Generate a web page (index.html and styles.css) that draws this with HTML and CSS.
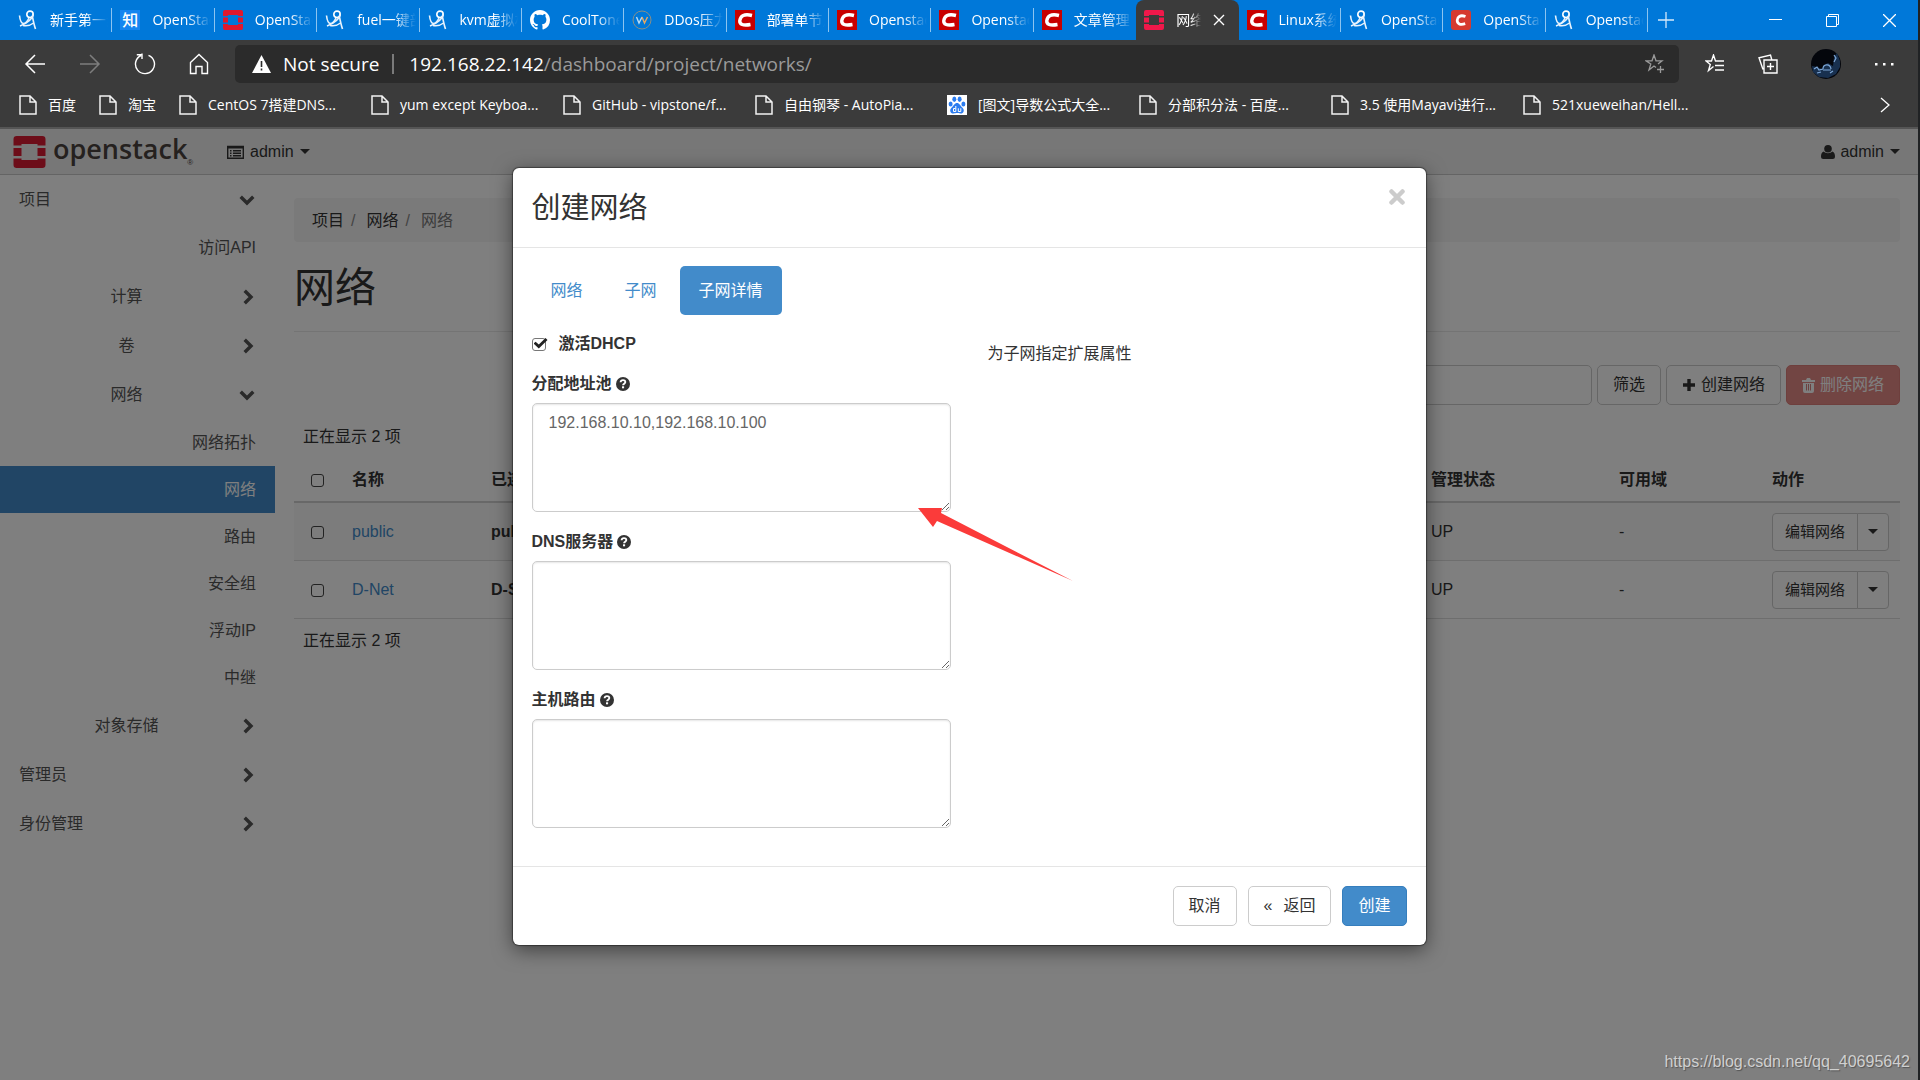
FILE: index.html
```html
<!DOCTYPE html>
<html lang="zh-CN">
<head>
<meta charset="utf-8">
<title>网络 - OpenStack Dashboard</title>
<link rel="stylesheet" href="styles.css">
</head>
<body>
<svg class="sprite" aria-hidden="true">
  <symbol id="i-figure" viewBox="0 0 20 20"><path d="M1.500 5.500c.5 4.500 1.500 8 4 8 2.500 0 4-2.500 5.500-5.500" fill="none" stroke="#e8f3fd" stroke-width="1.600"/><circle cx="12" cy="4.300" r="3.200" fill="none" stroke="#fff" stroke-width="1.600"/><path d="M15 4c0 4-5 9-13 12M14.500 7c.8 4 1.600 8 3 12M5 15.500c4 .8 8-.5 10.500-2.500" fill="none" stroke="#e8f3fd" stroke-width="1.600"/></symbol>
  <symbol id="i-os" viewBox="0 0 20 20"><path fill="currentColor" d="M2 0h16a2 2 0 0 1 2 2v4h-5V5H5v1H0V2a2 2 0 0 1 2-2zM0 7.500h5v5H0zM15 7.500h5v5h-5zM0 14h5v1h10v-1h5v4a2 2 0 0 1-2 2H2a2 2 0 0 1-2-2z"/></symbol>
  <symbol id="i-github" viewBox="0 0 16 16"><path fill="#fff" d="M8 0C3.580 0 0 3.580 0 8c0 3.540 2.290 6.530 5.470 7.590.4.070.55-.17.55-.38 0-.19-.01-.82-.01-1.490-2.010.37-2.530-.49-2.690-.94-.09-.23-.48-.94-.82-1.130-.28-.15-.68-.52-.01-.53.63-.01 1.080.58 1.230.82.72 1.210 1.870.87 2.330.66.070-.52.280-.87.510-1.070-1.780-.2-3.640-.89-3.640-3.950 0-.87.310-1.590.82-2.150-.08-.2-.36-1.020.080-2.120 0 0 .67-.21 2.200.82.640-.18 1.320-.27 2-.27s1.360.090 2 .27c1.530-1.040 2.200-.82 2.200-.82.440 1.100.160 1.920.080 2.120.51.560.82 1.270.82 2.150 0 3.070-1.870 3.750-3.650 3.950.29.250.54.730.54 1.480 0 1.070-.01 1.930-.01 2.200 0 .21.150.46.550.38A8.010 8.010 0 0 0 16 8c0-4.420-3.580-8-8-8z"/></symbol>
  <symbol id="i-w" viewBox="0 0 20 20"><circle cx="10" cy="10" r="9" fill="none" stroke="#8a8f86" stroke-width="1"/><path d="M4.500 7l2.500 6 3-6" fill="none" stroke="#b9dcf8" stroke-width="1.400"/><path d="M10 7l2.500 6 3-6" fill="none" stroke="#e8a860" stroke-width="1.400"/></symbol>
  <symbol id="i-csdn" viewBox="0 0 20 20"><path fill="#c80000" d="M0 0h20v20H0z"/><path d="M17 5.500C9 3.500 5.500 6 4.800 10.500 4.300 14.500 8 15.800 15.500 14.500" fill="none" stroke="#fff" stroke-width="3.400"/></symbol>
  <symbol id="i-csdn2" viewBox="0 0 20 20"><rect width="20" height="20" rx="3" fill="#d63a2f"/><path d="M14.500 6.500C9 4.500 6.300 7 6.200 10.300c0 3.500 3 5 8 3.400" fill="none" stroke="#fff" stroke-width="2.800"/></symbol>
  <symbol id="i-page" viewBox="0 0 18 20"><path d="M1 1h10l6 6v12H1zM11 1v6h6" fill="none" stroke="#f2f2f2" stroke-width="1.500"/></symbol>
  <symbol id="i-baidu" viewBox="0 0 20 20"><path fill="#fff" d="M0 0h20v20H0z"/><g fill="#2b7cf0"><ellipse cx="3.600" cy="9" rx="2" ry="2.600"/><ellipse cx="7.300" cy="4.300" rx="2" ry="2.700"/><ellipse cx="12.600" cy="4.300" rx="2" ry="2.700"/><ellipse cx="16.400" cy="9" rx="2" ry="2.600"/><path d="M10 8c2.500 0 3 2.500 5 4.200 3 2.500 2 6.300-1.500 6.300-1.500 0-2-.4-3.500-.4s-2 .4-3.500.4c-3.500 0-4.500-3.800-1.500-6.300C7 10.500 7.500 8 10 8z"/></g><path d="M8.800 11v5.500H6.500v-3h2M11.300 13.300v3.200h2.500v-3.200" fill="none" stroke="#fff" stroke-width="1"/></symbol>
  <symbol id="i-down" viewBox="0 0 14 14"><path d="M1.500 4.200L7 9.700l5.500-5.500" fill="none" stroke="currentColor" stroke-width="3"/></symbol>
  <symbol id="i-right" viewBox="0 0 14 14"><path d="M5 1.500L10.500 7 5 12.500" fill="none" stroke="currentColor" stroke-width="3"/></symbol>
  <symbol id="i-help" viewBox="0 0 14 14"><circle cx="7" cy="7" r="7" fill="#333"/><path d="M4.600 5.200C4.800 2.400 9.300 2.500 9.300 5c0 1.700-2.200 1.700-2.200 3.200" fill="none" stroke="#fff" stroke-width="1.900"/><path fill="#fff" d="M6 9.300h2.100v2H6z"/></symbol>
</svg>

<header class="browser">
  <div class="tabs">
    <div class="tab-list">
      <div class="tab"><svg class="fav"><use href="#i-figure"/></svg><span>新手第一步</span></div>
      <div class="tab"><b class="fav zhi">知</b><span>OpenStack</span></div>
      <div class="tab"><svg class="fav red"><use href="#i-os"/></svg><span>OpenStack</span></div>
      <div class="tab"><svg class="fav"><use href="#i-figure"/></svg><span>fuel一键部</span></div>
      <div class="tab"><svg class="fav"><use href="#i-figure"/></svg><span>kvm虚拟机</span></div>
      <div class="tab"><svg class="fav"><use href="#i-github"/></svg><span>CoolTone/</span></div>
      <div class="tab"><svg class="fav"><use href="#i-w"/></svg><span>DDos压力</span></div>
      <div class="tab"><svg class="fav"><use href="#i-csdn"/></svg><span>部署单节点</span></div>
      <div class="tab"><svg class="fav"><use href="#i-csdn"/></svg><span>Openstack</span></div>
      <div class="tab"><svg class="fav"><use href="#i-csdn"/></svg><span>Openstack</span></div>
      <div class="tab last"><svg class="fav"><use href="#i-csdn"/></svg><span>文章管理</span></div>
      <div class="tab active"><svg class="fav pink"><use href="#i-os"/></svg><span>网络 -</span><button class="plain" aria-label="Close tab"><svg width="12" height="12" viewBox="0 0 12 12"><path d="M1 1l10 10M11 1L1 11" stroke="#fff" stroke-width="1.400"/></svg></button></div>
      <div class="tab"><svg class="fav"><use href="#i-csdn"/></svg><span>Linux系统</span></div>
      <div class="tab"><svg class="fav"><use href="#i-figure"/></svg><span>OpenStack</span></div>
      <div class="tab"><svg class="fav"><use href="#i-csdn2"/></svg><span>OpenStack</span></div>
      <div class="tab"><svg class="fav"><use href="#i-figure"/></svg><span>Openstack</span></div>
    </div>
    <button class="plain newtab" aria-label="New tab"><svg width="16" height="16" viewBox="0 0 16 16"><path d="M8 0v16M0 8h16" stroke="#d4e9fa" stroke-width="1.300"/></svg></button>
    <div class="window-buttons">
      <button class="plain" aria-label="Minimize"><svg width="13" height="13" viewBox="0 0 13 13"><path d="M0 5.500h13" stroke="#fff"/></svg></button>
      <button class="plain" aria-label="Restore"><svg width="13" height="13" viewBox="0 0 13 13"><path d="M.5 2.500h10v10H.5zM2.500 2.500v-2h10v10h-2" fill="none" stroke="#fff"/></svg></button>
      <button class="plain" aria-label="Close"><svg width="13" height="13" viewBox="0 0 13 13"><path d="M0 0l13 13M13 0L0 13" stroke="#fff" stroke-width="1.300"/></svg></button>
    </div>
  </div>
  <div class="toolbar">
    <div class="nav-buttons">
      <button class="plain" aria-label="Back"><svg width="22" height="20" viewBox="0 0 22 20"><path d="M21 10H2M11 1L2 10l9 9" fill="none" stroke="#fff" stroke-width="1.500"/></svg></button>
      <button class="plain" aria-label="Forward"><svg width="22" height="20" viewBox="0 0 22 20"><path d="M1 10h19M11 1l9 9-9 9" fill="none" stroke="#7d7d7d" stroke-width="1.500"/></svg></button>
      <button class="plain" aria-label="Refresh"><svg width="22" height="22" viewBox="0 0 22 22"><path d="M14.500 2.300a9.500 9.500 0 1 1-7.500.2M8 .5v5.500M2.800 1.800H8" fill="none" stroke="#fff" stroke-width="1.400"/></svg></button>
      <button class="plain" aria-label="Home"><svg width="20" height="22" viewBox="0 0 20 22"><path d="M1.500 9.500L10 1.500l8.500 8v11h-5.500v-7h-6v7H1.500z" fill="none" stroke="#fff" stroke-width="1.400"/></svg></button>
    </div>
    <div class="address">
      <svg width="19" height="18" viewBox="0 0 19 18"><path fill="#fff" d="M9.500 0L19 18H0z"/><path d="M9.500 6v6M9.500 13.500v2" stroke="#2b2b2b" stroke-width="1.600"/></svg>
      <span class="insecure">Not secure</span>
      <span class="url"><b>192.168.22.142</b>/dashboard/project/networks/</span>
      <button class="plain grey" aria-label="Add favorite"><svg width="20" height="20" viewBox="0 0 20 20"><path d="M11 13.500L9 12l-5 4 1.800-6L1 6.800h6L9 1l2 5.800h6l-4 3.200M12 15.500h7M15.500 12v7" fill="none" stroke="#9a9a9a" stroke-width="1.300"/></svg></button>
    </div>
    <div class="actions">
      <button class="plain" aria-label="Favorites"><svg width="20" height="20" viewBox="0 0 20 20"><path d="M8.500 12.500l-5 4 1.800-6L1 7h5.500l2-6 2 6H19M10 11.500h9M10 16h9" fill="none" stroke="#fff" stroke-width="1.400"/></svg></button>
      <button class="plain" aria-label="Collections"><svg width="20" height="20" viewBox="0 0 20 20"><path d="M6 6h13v13H6zM12.500 9v7M9 12.500h7M5 15.500L1 3.800 12.500 1l1.200 4.500" fill="none" stroke="#fff" stroke-width="1.400"/></svg></button>
      <button class="plain" aria-label="Profile"><svg width="30" height="30" viewBox="0 0 30 30"><circle cx="15" cy="15" r="15" fill="#04060c"/><path d="M1 17l5 1 5 2 2-4 4-2 5 3 1-9 3-4 3 8 0 6-4 7-8 4-9-1-6-5z" fill="#18304f"/><path d="M3 20l3-2 2 3 4-1M12 20c0-5 7-6 8 0M12 21h8M23 6l2 3-2 4M6 24l4-1M19 24l3-2" fill="none" stroke="#7ea8d8" stroke-width="1.200"/></svg></button>
      <button class="plain" aria-label="Settings and more"><svg width="20" height="4" viewBox="0 0 20 4"><path fill="#fff" d="M1 1h2.500v2.500H1zM9 1h2.500v2.500H9zM17 1h2.500v2.500H17z"/></svg></button>
    </div>
  </div>
  <nav class="bookmarks">
    <a class="short" href="#"><svg class="page"><use href="#i-page"/></svg>百度</a>
    <a class="short" href="#"><svg class="page"><use href="#i-page"/></svg>淘宝</a>
    <a href="#"><svg class="page"><use href="#i-page"/></svg>CentOS 7搭建DNS...</a>
    <a href="#"><svg class="page"><use href="#i-page"/></svg>yum except Keyboa...</a>
    <a href="#"><svg class="page"><use href="#i-page"/></svg>GitHub - vipstone/f...</a>
    <a href="#"><svg class="page"><use href="#i-page"/></svg>自由钢琴 - AutoPia...</a>
    <a href="#"><svg class="fav"><use href="#i-baidu"/></svg>[图文]导数公式大全...</a>
    <a href="#"><svg class="page"><use href="#i-page"/></svg>分部积分法 - 百度...</a>
    <a href="#"><svg class="page"><use href="#i-page"/></svg>3.5 使用Mayavi进行...</a>
    <a href="#"><svg class="page"><use href="#i-page"/></svg>521xueweihan/Hell...</a>
    <button class="plain more" aria-label="More favorites"><svg width="10" height="16" viewBox="0 0 10 16"><path d="M1 1l8 7-8 7" fill="none" stroke="#fff" stroke-width="1.300"/></svg></button>
  </nav>
</header>

<div class="page-area">
  <header class="navbar">
    <a class="brand" href="#"><svg><use href="#i-os"/></svg><span>openstack</span><small>®</small></a>
    <button class="plain menu"><svg width="17" height="14" viewBox="0 0 17 14"><path d="M.7 1.500h15.600v11.800H.7z" fill="none" stroke="currentColor" stroke-width="1.400"/><path d="M0 1h17v2.500H0zM3 5h1.500v1.500H3zM6 5h8v1.500H6zM3 7.600h1.500v1.400H3zM6 7.600h8V9H6zM3 10h1.500v1.400H3zM6 10h8v1.400H6z" fill="currentColor"/></svg>admin<i class="caret"></i></button>
    <button class="plain menu user"><svg width="14" height="14" viewBox="0 0 14 14"><circle cx="7" cy="3.800" r="3.800" fill="currentColor"/><path d="M2.800 6.500C.5 7 0 9.500 0 11.500 0 13.200.8 14 2.300 14h9.400c1.500 0 2.300-.8 2.300-2.500 0-2-.5-4.500-2.800-5-2 2.300-6.400 2.300-8.400 0z" fill="currentColor"/></svg>admin<i class="caret"></i></button>
  </header>
  <div class="columns">
    <nav class="sidebar">
      <a class="group" href="#"><span>项目</span><svg><use href="#i-down"/></svg></a>
      <a class="leaf first" href="#">访问API</a>
      <a class="group sub" href="#"><span>计算</span><svg><use href="#i-right"/></svg></a>
      <a class="group sub" href="#"><span>卷</span><svg><use href="#i-right"/></svg></a>
      <a class="group sub" href="#"><span>网络</span><svg><use href="#i-down"/></svg></a>
      <a class="leaf" href="#">网络拓扑</a>
      <a class="leaf current" href="#">网络</a>
      <a class="leaf" href="#">路由</a>
      <a class="leaf" href="#">安全组</a>
      <a class="leaf" href="#">浮动IP</a>
      <a class="leaf" href="#">中继</a>
      <a class="group sub" href="#"><span>对象存储</span><svg><use href="#i-right"/></svg></a>
      <a class="group" href="#"><span>管理员</span><svg><use href="#i-right"/></svg></a>
      <a class="group" href="#"><span>身份管理</span><svg><use href="#i-right"/></svg></a>
    </nav>
    <main>
      <ol class="breadcrumb"><li><a href="#">项目</a></li><li><a href="#">网络</a></li><li class="here">网络</li></ol>
      <h1>网络</h1>
      <div class="table-actions">
        <input type="text" aria-label="筛选条件">
        <button class="btn">筛选</button>
        <button class="btn"><svg width="14" height="14" viewBox="0 0 14 14"><path fill="currentColor" d="M5.300 1h3.400v4.300H13v3.400H8.700V13H5.300V8.700H1V5.300h4.300z"/></svg>创建网络</button>
        <button class="btn danger"><svg width="13" height="15" viewBox="0 0 13 15"><path fill="currentColor" d="M0 2h4l1-2h3l1 2h4v2H0zM1 5h11v8a2 2 0 0 1-2 2H3a2 2 0 0 1-2-2z"/><path d="M4.500 6v6.500M6.500 6v6.500M8.500 6v6.500" stroke="#d9837f" stroke-width="1"/></svg>删除网络</button>
      </div>
      <p class="count">正在显示 2 项</p>
      <table>
        <thead>
          <tr><th class="c-check"><input type="checkbox" aria-label="全选"></th><th class="c-name">名称</th><th>已连接的子网</th><th class="c-state">管理状态</th><th class="c-zone">可用域</th><th class="c-act">动作</th></tr>
        </thead>
        <tbody>
          <tr><td><input type="checkbox" aria-label="public"></td><td><a href="#">public</a></td><td><b>public-subnet</b></td><td>UP</td><td>-</td><td><div class="split"><button class="btn small">编辑网络</button><button class="btn small toggle" aria-label="更多"><i class="caret"></i></button></div></td></tr>
          <tr><td><input type="checkbox" aria-label="D-Net"></td><td><a href="#">D-Net</a></td><td><b>D-Subnet</b></td><td>UP</td><td>-</td><td><div class="split"><button class="btn small">编辑网络</button><button class="btn small toggle" aria-label="更多"><i class="caret"></i></button></div></td></tr>
        </tbody>
      </table>
      <p class="count foot">正在显示 2 项</p>
    </main>
  </div>

  <div class="overlay">
    <section class="modal" role="dialog" aria-labelledby="modal-title">
      <header class="modal-header">
        <h2 id="modal-title">创建网络</h2>
        <button class="plain" aria-label="关闭"><svg width="16" height="16" viewBox="0 0 16 16"><path d="M2.500 2.500l11 11M13.500 2.500l-11 11" stroke="#ccc" stroke-width="4.500" stroke-linecap="round"/></svg></button>
      </header>
      <div class="modal-body">
        <nav class="pills"><a href="#">网络</a><a href="#">子网</a><a class="on" href="#">子网详情</a></nav>
        <div class="form-columns">
          <form class="fields">
            <label class="dhcp"><input type="checkbox" checked>激活DHCP</label>
            <label for="pools">分配地址池<svg><use href="#i-help"/></svg></label>
            <textarea id="pools">192.168.10.10,192.168.10.100</textarea>
            <label for="dns">DNS服务器<svg><use href="#i-help"/></svg></label>
            <textarea id="dns"></textarea>
            <label for="routes">主机路由<svg><use href="#i-help"/></svg></label>
            <textarea id="routes"></textarea>
          </form>
          <p class="help">为子网指定扩展属性</p>
        </div>
      </div>
      <footer class="modal-footer">
        <button class="btn">取消</button>
        <button class="btn back"><span>«</span>返回</button>
        <button class="btn primary">创建</button>
      </footer>
      <svg class="arrow" viewBox="0 0 156 74" aria-hidden="true"><path fill="#fb3b3a" d="M0 1h24l-1 5 132 68L19 14l-4 6z"/></svg>
    </section>
    <p class="watermark">https://blog.csdn.net/qq_40695642</p>
  </div>
</div>
</body>
</html>
```
FILE: styles.css
```css
* { box-sizing: border-box; }
body {
  margin: 0;
  min-height: 100vh;
  display: flex;
  flex-direction: column;
  background: #202224;
  padding-right: 2px;
  font: 16px/24px "Liberation Sans", "Noto Sans CJK SC", sans-serif;
  color: #333;
}
.sprite { display: none; }
a { color: #428bca; text-decoration: none; }
p, h1, h2 { margin: 0; font-weight: 400; }
svg { flex: none; }
.plain {
  display: flex;
  align-items: center;
  padding: 0;
  border: 0;
  background: none;
  font: inherit;
  color: inherit;
}

/* browser chrome */
.browser {
  background: #3b3b3b;
  border-bottom: 2px solid #555;
  color: #fff;
  font-family: "Open Sans", "Noto Sans CJK SC", sans-serif;
}
.tabs {
  display: flex;
  height: 40px;
  padding-left: 10px;
  background: #0078d9;
  font-size: 14px;
}
.tab-list { display: flex; flex: 0 1 1638px; min-width: 0; }
.tab {
  position: relative;
  display: flex;
  align-items: center;
  flex: 1 1 102px;
  min-width: 0;
  padding: 0 4px 0 8px;
  gap: 12px;
}
.tab::after {
  content: "";
  position: absolute;
  right: 0;
  top: 8px;
  bottom: 8px;
  border-right: 1px solid #8cc4f0;
}
.tab.last::after, .tab.active::after { display: none; }
.tab span {
  flex: 1;
  overflow: hidden;
  white-space: nowrap;
  mask-image: linear-gradient(to right, #000 60%, transparent);
}
.tab.active { background: #3b3b3b; border-radius: 8px 8px 0 0; padding-right: 14px; }
.fav { width: 20px; height: 20px; flex: none; }
.zhi { background: #1585f0; text-align: center; font-size: 16px; font-weight: 500; line-height: 20px; }
.red { color: #e0182d; }
.pink { color: #f0184a; }
.newtab { margin-left: 10px; }
.window-buttons { display: flex; gap: 44px; margin-left: auto; padding-right: 22px; }
.toolbar { display: flex; align-items: center; padding: 5px 24px 0 24px; }
.nav-buttons { display: flex; align-items: center; gap: 33px; width: 211px; }
.address {
  flex: 1;
  display: flex;
  align-items: center;
  height: 38px;
  padding: 0 14px 0 17px;
  border-radius: 5px;
  background: #2b2b2b;
  font-size: 19px;
}
.insecure { margin-left: 12px; padding-right: 13px; border-right: 2px solid #7a7a7a; line-height: 20px; }
.url { margin-left: 15px; color: #9a9a9a; }
.url b { font-weight: 400; color: #fff; }
.grey { margin-left: auto; }
.actions { display: flex; align-items: center; gap: 33px; margin-left: 26px; }
.bookmarks { display: flex; align-items: center; height: 44px; padding: 0 28px 0 19px; font-size: 14px; }
.bookmarks a { display: flex; align-items: center; gap: 11px; width: 192px; color: #fff; white-space: nowrap; }
.bookmarks .short { width: 80px; }
.page { width: 18px; height: 20px; }
.more { margin-left: auto; }

/* dashboard */
.page-area { position: relative; flex: 1; background: #fff; }
.navbar {
  display: flex;
  align-items: center;
  height: 46px;
  padding: 0 18px 0 13px;
  background: #efefef;
  border-bottom: 1px solid #c8c8c8;
}
.brand { display: flex; align-items: center; color: #4a423e; width: 214px; }
.brand svg { width: 33px; height: 32px; color: #da1a32; margin-right: 7px; }
.brand span { font: 600 27px/30px "Open Sans", sans-serif; padding-bottom: 6px; }
.brand small { align-self: flex-end; font-size: 8px; line-height: 14px; }
.menu { gap: 6px; }
.user { margin-left: auto; }
.user svg { margin-right: -1px; }
.caret { border: 5px solid transparent; border-top-color: currentColor; border-bottom: 0; }
.columns { display: flex; }
.sidebar { width: 275px; }
.sidebar a { display: flex; align-items: center; height: 47px; padding: 0 19px; color: #555; }
.sidebar .group { height: 49px; padding-right: 20px; }
.sidebar span { flex: 1; }
.sidebar svg { width: 16px; height: 16px; }
.sidebar .leaf { justify-content: flex-end; }
.sidebar .first { height: 48px; }
.sidebar .sub { padding-left: 14px; text-align: center; }
.sidebar .current { background: #428bca; color: #fff; }
main { flex: 1; padding: 23px 18px 0 19px; }
.breadcrumb {
  display: flex;
  align-items: center;
  height: 44px;
  margin: 0;
  padding: 2px 18px 0;
  border-radius: 4px;
  background: #f5f5f5;
  list-style: none;
}
.breadcrumb a { color: #333; }
.breadcrumb li + li::before { content: "/"; padding: 0 11px 0 7px; color: #888; }
.here { color: #777; }
h1 { padding: 17px 0 14px; border-bottom: 1px solid #e8e8e8; font-size: 41px; line-height: 58px; }
.table-actions { display: flex; justify-content: flex-end; gap: 5px; padding-top: 33px; }
.table-actions input { width: 260px; border: 1px solid #ccc; border-radius: 5px; background: #fff; }
.btn {
  display: flex;
  align-items: center;
  gap: 5px;
  height: 40px;
  padding: 0 15px;
  border: 1px solid #ccc;
  border-radius: 5px;
  background: #fff;
  color: #333;
  font: inherit;
  white-space: nowrap;
}
.btn.danger { background: #e58a87; border-color: #dd7e7a; color: #fff; }
.btn.primary { background: #428bca; border-color: #357ebd; color: #fff; }
.count { padding: 20px 9px 6px; }
.foot { padding-top: 10px; }
table { width: 100%; border-collapse: collapse; table-layout: fixed; }
th, td { height: 58px; padding: 1px 8px 0; text-align: left; border-bottom: 1px solid #ddd; white-space: nowrap; }
th { height: 47px; padding-top: 3px; border-bottom-width: 2px; border-bottom-color: #d0d0d0; }
tbody tr:nth-child(odd) { background: #f9f9f9; }
.c-check { width: 50px; }
.c-name { width: 139px; }
.c-state { width: 188px; }
.c-zone { width: 153px; }
.c-act { width: 136px; }
th input, td input, .dhcp input {
  appearance: none;
  display: block;
  width: 13px;
  height: 13px;
  margin: 1px 0 0 9px;
  border: 1px solid #444;
  border-radius: 3px;
}
.split { display: flex; }
.small { height: 38px; padding: 0 12px; font-size: 15px; border-radius: 4px 0 0 4px; }
.toggle { padding: 0 10px; margin-left: -1px; border-radius: 0 4px 4px 0; }
.small .caret { border-width: 5px 5px 0; }

/* dialog */
.overlay {
  position: absolute;
  inset: 0;
  display: flex;
  flex-direction: column;
  align-items: center;
  padding: 39px 0 6px 20px;
  background: rgba(0, 0, 0, .5);
}
.modal {
  position: relative;
  width: 913px;
  border-radius: 6px;
  background: #fff;
  box-shadow: 0 5px 20px rgba(0, 0, 0, .5), 0 0 1px 1px rgba(0, 0, 0, .4);
}
.modal-header { display: flex; justify-content: space-between; padding: 20px 21px 19px 19px; border-bottom: 1px solid #e5e5e5; }
.modal-header .plain { height: 18px; }
h2 { font-size: 29px; line-height: 40px; }
.modal-body { padding: 18px 19px 20px; }
.pills { display: flex; gap: 4px; }
.pills a { padding: 13px 19px 12px; border-radius: 5px; }
.pills .on { background: #428bca; color: #fff; }
.form-columns { display: grid; grid-template-columns: 419px 1fr; column-gap: 37px; }
.fields { display: flex; flex-direction: column; padding-top: 17px; }
.fields label { display: flex; align-items: center; gap: 4px; margin-bottom: 7px; font-weight: 700; }
.fields label svg { width: 14px; height: 14px; }
.fields .dhcp { gap: 13px; margin-bottom: 16px; }
.dhcp input { position: relative; width: 14px; margin: 0; border-color: #777; }
.dhcp input::after {
  content: "";
  position: absolute;
  inset: -1px -3px 0 1px;
  background: #222;
  clip-path: polygon(0 50%, 15% 35%, 38% 58%, 86% 4%, 100% 20%, 38% 92%);
}
textarea {
  height: 109px;
  margin-bottom: 18px;
  padding: 7px 16px;
  border: 1px solid #ccc;
  border-radius: 5px;
  box-shadow: inset 0 1px 2px rgba(0, 0, 0, .1);
  background: #fff;
  color: #666;
  font: inherit;
}
.help { padding-top: 27px; }
.modal-footer { display: flex; justify-content: flex-end; gap: 11px; padding: 19px; border-top: 1px solid #e5e5e5; }
.back { gap: 11px; }
.arrow { position: absolute; left: 405px; top: 339px; width: 156px; height: 74px; }
.watermark { align-self: flex-end; margin-top: auto; padding-right: 8px; color: #d0d0d0; text-shadow: 1px 1px 1px #555; }
```
